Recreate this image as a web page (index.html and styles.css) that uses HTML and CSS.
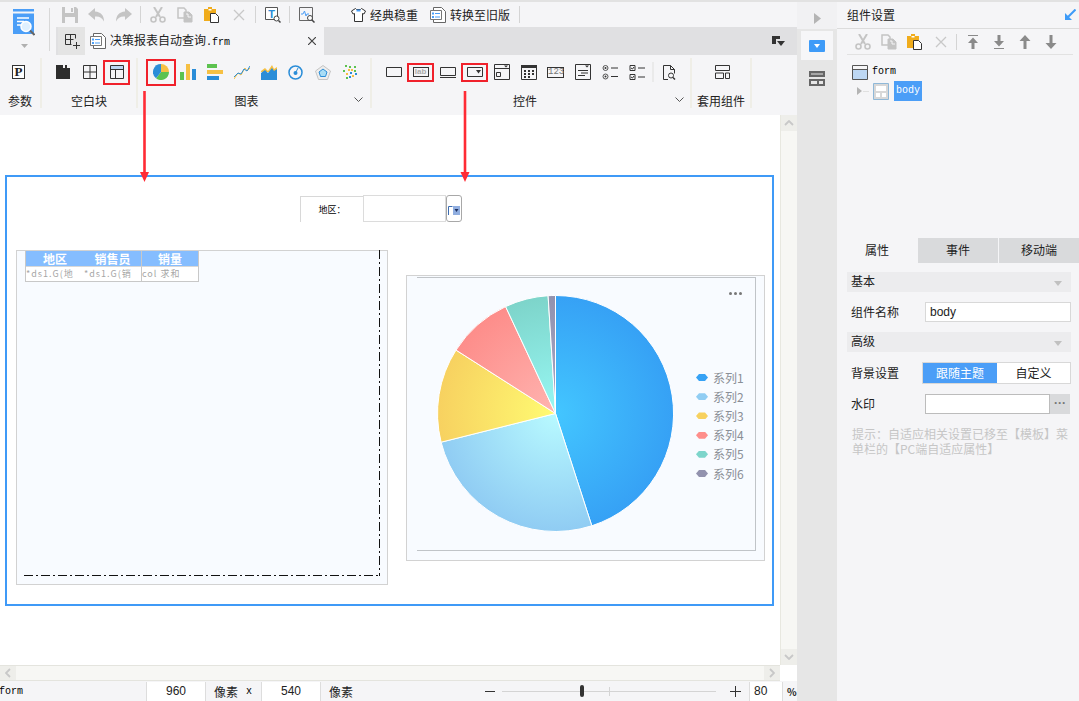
FILE: index.html
```html
<!DOCTYPE html>
<html lang="en">
<head>
    <meta charset="UTF-8">
    <title>决策报表自动查询.frm</title>
    <link rel="stylesheet" href="styles.css">
</head>
<body>

    <!-- Shared icons -->
    <svg class="defs" width="0" height="0">
        <defs>
            <symbol id="i-cut" viewBox="0 0 16 16">
                <path d="M4 0l6 10M12 0L6 10" fill="none" stroke="#c4c4c4" stroke-width="2"/>
                <circle cx="3.5" cy="12.5" r="2.5" fill="none" stroke="#c4c4c4" stroke-width="1.6"/>
                <circle cx="12.5" cy="12.5" r="2.5" fill="none" stroke="#c4c4c4" stroke-width="1.6"/>
            </symbol>
            <symbol id="i-copy" viewBox="0 0 16 16">
                <path d="M1 1h6l2 2v8H1z" fill="#f5f5f7" stroke="#c4c4c4" stroke-width="1.5"/>
                <path d="M7 5h5l3 3v7H7z" fill="#c4c4c4" stroke="#c4c4c4"/>
                <path d="M9 7h2v3h3" fill="none" stroke="#f5f5f7"/>
            </symbol>
            <symbol id="i-paste" viewBox="0 0 16 16">
                <path d="M0 2h4V0h4v2h4v12H0z" fill="#f0ac1c"/>
                <path d="M4.500 2h3v1.500h-3z" fill="#fff"/>
                <path d="M6.500 6.500h5l3 3v6h-8z" fill="#fff" stroke="#333"/>
            </symbol>
            <symbol id="i-x" viewBox="0 0 16 16">
                <path d="M3 3l10 10M13 3L3 13" stroke="#c8c8c8" stroke-width="1.3"/>
            </symbol>
            <symbol id="i-list" viewBox="0 0 16 16">
                <path d="M3.500 .5h8l4 4v11h-12z" fill="#fff" stroke="#666"/>
                <path d="M.5 3.500h11v9H.5z" fill="#fff" stroke="#777"/>
                <path d="M2 5.500h2v2H2zM2 9h2v2H2z" fill="#4b9ef7"/>
                <path d="M5 6.500h5M5 10h5" stroke="#4b9ef7"/>
            </symbol>
        </defs>
    </svg>

    <div class="left">
        <div class="head">
            <div class="logo-col">
                <div class="logo">
                    <svg width="22" height="30" viewBox="0 0 22 30">
                        <path d="M0 0h21v2.500H0z" fill="#4b9ef7"/>
                        <path d="M0 4.500h21V25H0z" fill="#4b9ef7"/>
                        <path d="M4 9h12M4 12.500h7M4 16h6" stroke="#fff" stroke-width="1.300"/>
                        <circle cx="13" cy="17.500" r="5" fill="#dff0ff" stroke="#fff" stroke-width="1.500"/>
                        <path d="M17 21.500l4.500 4.500" stroke="#666" stroke-width="2"/>
                    </svg>
                    <svg class="logo-caret" width="7" height="4" viewBox="0 0 7 4"><path d="M0 0h7L3.500 4z" fill="#b0b0b0"/></svg>
                </div>
            </div>
            <div class="head-main">
                <div class="toolbar">
                    <span class="cell"><svg width="16" height="16" viewBox="0 0 16 16"><path d="M0 0h14l2 2v14H0z" fill="#c4c4c4"/><path d="M3 0h9v6H3zM3 10h10v6H3z" fill="#f5f5f7"/><path d="M9 1h2v4H9z" fill="#c4c4c4"/></svg></span>
                    <span class="cell"><svg width="17" height="14" viewBox="0 0 17 14"><path d="M7 0L0 6l7 6V8.500c4-.5 7 1 9 5 0-6-3-9.500-9-10z" fill="#c4c4c4"/></svg></span>
                    <span class="cell"><svg width="17" height="14" viewBox="0 0 17 14"><path d="M10 0l7 6-7 6V8.500c-4-.5-7 1-9 5 0-6 3-9.500 9-10z" fill="#c4c4c4"/></svg></span>
                    <i class="tsep"></i>
                    <span class="cell"><svg class="ic"><use href="#i-cut"/></svg></span>
                    <span class="cell"><svg class="ic"><use href="#i-copy"/></svg></span>
                    <span class="cell"><svg class="ic"><use href="#i-paste"/></svg></span>
                    <span class="cell"><svg class="ic"><use href="#i-x"/></svg></span>
                    <i class="tsep"></i>
                    <span class="cell"><svg class="ic" viewBox="0 0 16 16"><path d="M.5.500h12v12H.5z" fill="#fff" stroke="#555"/><text x="6.500" y="10.500" class="t-glyph">T</text><circle cx="11.500" cy="11.500" r="2.500" fill="#fff" stroke="#444"/><path d="M13.500 13.500l2 2" stroke="#444" stroke-width="1.500"/></svg></span>
                    <i class="tsep"></i>
                    <span class="cell"><svg class="ic" viewBox="0 0 16 16"><path d="M.5.500h13v13H.5z" fill="#f5f5f7" stroke="#666"/><path d="M2 7h2l1.500-3L7 9l1-2h2" fill="none" stroke="#4b9ef7"/><circle cx="11" cy="11" r="2.500" fill="#fff" stroke="#444"/><path d="M13 13l2.500 2.500" stroke="#444" stroke-width="1.500"/></svg></span>
                    <span class="tb-text first">
                        <svg width="15" height="14" viewBox="0 0 15 14"><path d="M4.500.5L.5 3l1.500 3 1.500-.5v8h8v-8l1.500.5L14.500 3l-4-2.500-1 1h-4z" fill="#fff" stroke="#333"/><path d="M5.500 1.500h4v2h-4z" fill="#4b9ef7"/></svg>
                        经典稳重
                    </span>
                    <span class="tb-text">
                        <svg class="ic"><use href="#i-list"/></svg>
                        转换至旧版
                    </span>
                    <i class="tsep last"></i>
                </div>
                <div class="tabs">
                    <span class="tab-add">
                        <svg width="15" height="15" viewBox="0 0 15 15"><path d="M.5.500h10v4M.5.500v10h6M.5 5.500h8M5.500.5v10M11.500 8v7M8 11.500h7" fill="none" stroke="#333"/></svg>
                    </span>
                    <div class="tab">
                        <svg class="ic"><use href="#i-list"/></svg>
                        <span class="tab-name">决策报表自动查询<span class="mono">.frm</span></span>
                        <svg class="tab-close" width="8" height="8" viewBox="0 0 8 8"><path d="M0 0l8 8M8 0L0 8" stroke="#444" stroke-width="1.200"/></svg>
                    </div>
                    <svg class="tab-menu" width="13" height="11" viewBox="0 0 13 11"><path d="M0 0h8v3h-4v5H0z" fill="#333"/><path d="M5 5h8l-4 5z" fill="#333"/></svg>
                </div>
            </div>
        </div>

        <div class="ribbon">
            <div class="group g-param">
                <div class="g-icons">
                    <span class="cell"><span class="p-ic">P</span></span>
                </div>
                <div class="g-label">参数</div>
            </div>
            <div class="group g-blank">
                <div class="g-icons">
                    <span class="cell"><svg width="14" height="14" viewBox="0 0 14 14"><path d="M0 0h7v3h2V0h2v3h3v11H0z" fill="#2d2d2d"/></svg></span>
                    <span class="cell"><svg width="14" height="14" viewBox="0 0 14 14"><path d="M.5.500h13v13H.5zM.5 7h13M7 .5V14" fill="none" stroke="#333"/></svg></span>
                    <span class="cell"><span class="red r-blank"><svg width="14" height="14" viewBox="0 0 14 14"><path d="M.5.500h13v4H.5z" fill="#bcd7f2"/><path d="M.5.500h13v13H.5zM.5 4.500h13M5.500 4.500V14" fill="none" stroke="#333"/></svg></span></span>
                </div>
                <div class="g-label">空白块</div>
            </div>
            <div class="group g-chart">
                <div class="g-icons">
                    <span class="cell"><span class="red r-pie"><svg width="16" height="16" viewBox="0 0 16 16"><path d="M8 8V0a8 8 0 0 1 8 8z" fill="#f6c043"/><path d="M8 8h8a8 8 0 0 1-13 6.200z" fill="#5cc24f"/><path d="M8 8L3 14.200A8 8 0 0 1 8 0z" fill="#2a8dd8"/></svg></span></span>
                    <span class="cell"><svg width="16" height="16" viewBox="0 0 16 16"><path d="M0 8h4v8H0z" fill="#5cc24f"/><path d="M6 0h4v16H6z" fill="#f6c043"/><path d="M12 5h4v11h-4z" fill="#2a8dd8"/></svg></span>
                    <span class="cell"><svg width="16" height="16" viewBox="0 0 16 16"><path d="M0 0h10v4H0z" fill="#5cc24f"/><path d="M0 6h16v4H0z" fill="#f6c043"/><path d="M0 12h12v4H0z" fill="#2a8dd8"/></svg></span>
                    <span class="cell"><svg width="16" height="14" viewBox="0 0 16 14"><path d="M0 14l4-6 3 2 4-7 2 3 3-3" fill="none" stroke="#f6c043"/><path d="M0 12l4-4 3 1 3-5 3 2 3-5" fill="none" stroke="#2a8dd8"/></svg></span>
                    <span class="cell"><svg width="16" height="15" viewBox="0 0 16 15"><path d="M0 6l4-3 3 3 4-6 2 4 3-2v5H0z" fill="#f6c043"/><path d="M0 8l4-3 3 3 4-5 2 3 3-2v11H0z" fill="#2a8dd8"/></svg></span>
                    <span class="cell"><svg width="15" height="15" viewBox="0 0 15 15"><circle cx="7.500" cy="7.500" r="6.500" fill="none" stroke="#2a8dd8" stroke-width="1.500"/><circle cx="7.500" cy="8" r="2" fill="#2a8dd8"/><path d="M8 7l2-4" stroke="#2a8dd8"/></svg></span>
                    <span class="cell"><svg width="16" height="15" viewBox="0 0 16 15"><path d="M8 .5l7.500 5.500-3 8.500h-9L.5 6z" fill="#eee" stroke="#c4c4c4"/><path d="M8 4l4 3-1.500 4.500h-5L4 7z" fill="#a9ddf5" stroke="#2a8dd8"/></svg></span>
                    <span class="cell"><svg width="14" height="15" viewBox="0 0 14 15"><path d="M2 0h2v2H2zM6 1h2v2H6zM11 1h2v2h-2zM0 5h2v2H0zM11 5h2v2h-2zM3 12h2v2H3z" fill="#5cc24f"/><path d="M5 4h2v2H5zM8 4h2v2H8zM3 8h2v2H3zM9 10h2v2H9z" fill="#f6c043"/><path d="M7 7h2v2H7zM12 8h2v2h-2zM6 11h2v2H6z" fill="#2a8dd8"/></svg></span>
                </div>
                <div class="g-label">图表</div>
                <svg class="chev" width="9" height="5" viewBox="0 0 9 5"><path d="M.5.500l4 4 4-4" fill="none" stroke="#555"/></svg>
            </div>
            <div class="group g-ctrl">
                <div class="g-icons">
                    <span class="cell"><svg width="16" height="10" viewBox="0 0 16 10"><path d="M.5.500h15v9H.5z" fill="none" stroke="#333"/></svg></span>
                    <span class="cell"><span class="red r-ctrl"><span class="lab-ic">lab</span></span></span>
                    <span class="cell"><svg width="16" height="11" viewBox="0 0 16 11"><path d="M.5.500h15v8H.5z" fill="none" stroke="#333"/><path d="M0 10.500h16" stroke="#333"/></svg></span>
                    <span class="cell"><span class="red r-ctrl"><svg width="16" height="10" viewBox="0 0 16 10"><path d="M.5.500h15v9H.5z" fill="none" stroke="#333"/><path d="M9 3h5l-2.500 3.500z" fill="#333"/></svg></span></span>
                    <span class="cell"><svg width="16" height="16" viewBox="0 0 16 16"><path d="M.5.500h15v15H.5zM.5 4.500h15M6.500 8.500h-4v4h4z" fill="none" stroke="#333"/><path d="M10 1.500h4L12 3.500z" fill="#333"/></svg></span>
                    <span class="cell"><svg width="16" height="16" viewBox="0 0 16 16"><path d="M.5 1.500h15v14H.5z" fill="none" stroke="#333"/><path d="M0 1h16v3H0zM3 6h2v2H3zM7 6h2v2H7zM11 6h2v2h-2zM3 9h2v2H3zM7 9h2v2H7zM11 9h2v2h-2zM3 12h2v2H3zM7 12h2v2H7z" fill="#333"/></svg></span>
                    <span class="cell"><span class="num-ic">123</span></span>
                    <span class="cell"><svg width="16" height="16" viewBox="0 0 16 16"><path d="M.5.500h15v15H.5zM3 6.500h10M6 9h7M3 11.500h7" fill="none" stroke="#333"/><path d="M10 1.500h4L12 3.500z" fill="#333"/></svg></span>
                    <span class="cell"><svg width="16" height="15" viewBox="0 0 16 15"><circle cx="3.500" cy="3" r="2.500" fill="none" stroke="#555"/><circle cx="3.500" cy="3" r="1" fill="#333"/><circle cx="3.500" cy="11.500" r="2.500" fill="none" stroke="#555"/><circle cx="3.500" cy="11.500" r="1" fill="#333"/><path d="M9 3h7M9 11.500h7" stroke="#333"/></svg></span>
                    <span class="cell"><svg width="16" height="15" viewBox="0 0 16 15"><path d="M1 .5h5v5H1zM1 9.500h5v5H1zM9 3h7M9 12h7" fill="none" stroke="#333"/><path d="M2 3l1.500 1L5 2M2 12l1.500 1L5 11" fill="none" stroke="#333"/></svg></span>
                    <i class="rsep"></i>
                    <span class="cell"><svg width="13" height="15" viewBox="0 0 13 15"><path d="M5 14.500H.5V.5h7l4 4v4M7.500.5v4h4" fill="none" stroke="#333"/><circle cx="8" cy="10.500" r="2.500" fill="none" stroke="#333"/><path d="M10 12.500l2 2" stroke="#333" stroke-width="1.500"/></svg></span>
                </div>
                <div class="g-label">控件</div>
                <svg class="chev" width="9" height="5" viewBox="0 0 9 5"><path d="M.5.500l4 4 4-4" fill="none" stroke="#555"/></svg>
            </div>
            <div class="group g-comp">
                <div class="g-icons">
                    <span class="cell"><svg width="15" height="14" viewBox="0 0 15 14"><path d="M.5.500h14v5H.5zM.5 8h8v5.500H.5zM10.500 8h4v5.500h-4z" fill="none" stroke="#333"/></svg></span>
                </div>
                <div class="g-label">套用组件</div>
            </div>
        </div>

        <div class="work">
            <div class="canvas">
                <div class="frame">
                    <div class="filter">
                        <span class="filter-label">地区：</span>
                        <span class="filter-input"></span>
                        <span class="filter-btn">
                            <svg width="12" height="9" viewBox="0 0 12 9"><path d="M.5 9V.5h4" fill="none" stroke="#3d6cb0"/><path d="M5 0h7v9H5z" fill="#90aee0"/><path d="M6.500 3h4L8.500 6z" fill="#1d2f5e"/></svg>
                        </span>
                    </div>
                    <div class="blocks">
                        <div class="table-block">
                            <div class="tbl">
                                <div class="th">地区</div>
                                <div class="th">销售员</div>
                                <div class="th th-last">销量</div>
                                <div class="td">*ds1.G(地</div>
                                <div class="td">*ds1.G(销</div>
                                <div class="td td-last">col 求和</div>
                            </div>
                            <svg class="dash" width="372" height="335" viewBox="0 0 372 335">
                                <path d="M363.500 0V326" fill="none" stroke="#111" stroke-dasharray="9 3 2 3"/>
                                <path d="M8 325.500H362" fill="none" stroke="#111" stroke-dasharray="9 3 2 3"/>
                            </svg>
                        </div>
                        <div class="chart-block">
                            <div class="chart-inner">
                                <svg class="pie" width="237" height="237" viewBox="-118.500 -118.500 237 237">
                                    <defs>
                                        <radialGradient id="p1" gradientUnits="userSpaceOnUse" cx="0" cy="0" r="118"><stop offset="0" stop-color="#43c6ff"/><stop offset="1" stop-color="#36a1f5"/></radialGradient>
                                        <radialGradient id="p2" gradientUnits="userSpaceOnUse" cx="0" cy="0" r="118"><stop offset="0" stop-color="#b8faff"/><stop offset="1" stop-color="#90ccf3"/></radialGradient>
                                        <radialGradient id="p3" gradientUnits="userSpaceOnUse" cx="0" cy="0" r="118"><stop offset="0" stop-color="#fffb72"/><stop offset="1" stop-color="#f7d160"/></radialGradient>
                                        <radialGradient id="p4" gradientUnits="userSpaceOnUse" cx="0" cy="0" r="118"><stop offset="0" stop-color="#ffb4b0"/><stop offset="1" stop-color="#fd8d8a"/></radialGradient>
                                        <radialGradient id="p5" gradientUnits="userSpaceOnUse" cx="0" cy="0" r="118"><stop offset="0" stop-color="#98f8f4"/><stop offset="1" stop-color="#7dd4ca"/></radialGradient>
                                        <radialGradient id="p6" gradientUnits="userSpaceOnUse" cx="0" cy="0" r="118"><stop offset="0" stop-color="#a6a6c8"/><stop offset="1" stop-color="#9292ae"/></radialGradient>
                                    </defs>
                                    <g stroke="#fff" stroke-width="1">
                                        <path d="M0 0V-118A118 118 0 0 1 36.300 112.300z" fill="url(#p1)"/>
                                        <path d="M0 0L36.300 112.300A118 118 0 0 1-114.400 28.700z" fill="url(#p2)"/>
                                        <path d="M0 0L-114.400 28.700A118 118 0 0 1-99.500-63.400z" fill="url(#p3)"/>
                                        <path d="M0 0L-99.500-63.400A118 118 0 0 1-49.900-106.900z" fill="url(#p4)"/>
                                        <path d="M0 0L-49.900-106.900A118 118 0 0 1-7.400-117.800z" fill="url(#p5)"/>
                                        <path d="M0 0L-7.400-117.800A118 118 0 0 1 0-118z" fill="url(#p6)"/>
                                    </g>
                                </svg>
                                <ul class="legend">
                                    <li><i class="dot s1"></i>系列1</li>
                                    <li><i class="dot s2"></i>系列2</li>
                                    <li><i class="dot s3"></i>系列3</li>
                                    <li><i class="dot s4"></i>系列4</li>
                                    <li><i class="dot s5"></i>系列5</li>
                                    <li><i class="dot s6"></i>系列6</li>
                                </ul>
                                <span class="chart-menu"><i></i><i></i><i></i></span>
                            </div>
                        </div>
                    </div>
                </div>
            </div>
            <div class="vscroll">
                <span class="sbtn"><svg width="10" height="6" viewBox="0 0 10 6"><path d="M1 5l4-4 4 4" fill="none" stroke="#c8c8c8" stroke-width="1.800"/></svg></span>
                <span class="sbtn"><svg width="10" height="6" viewBox="0 0 10 6"><path d="M1 1l4 4 4-4" fill="none" stroke="#c8c8c8" stroke-width="1.800"/></svg></span>
            </div>
        </div>

        <div class="hscroll">
            <div class="hbar">
                <span class="sbtn"><svg width="6" height="10" viewBox="0 0 6 10"><path d="M5 1L1 5l4 4" fill="none" stroke="#c8c8c8" stroke-width="1.800"/></svg></span>
                <span class="sbtn"><svg width="6" height="10" viewBox="0 0 6 10"><path d="M1 1l4 4-4 4" fill="none" stroke="#c8c8c8" stroke-width="1.800"/></svg></span>
            </div>
        </div>

        <div class="status">
            <span class="mono st-form">form</span>
            <span class="st-input w-size">960</span>
            <span class="st-unit">像素</span>
            <span class="mono st-x">x</span>
            <span class="st-input w-size">540</span>
            <span class="st-unit">像素</span>
            <span class="zoom-minus"></span>
            <div class="slider"><i class="knob"></i><i class="tick"></i></div>
            <svg class="zoom-plus" width="11" height="11" viewBox="0 0 11 11"><path d="M0 5.500h11M5.500 0v11" stroke="#333"/></svg>
            <span class="st-input w-zoom">80</span>
            <span class="st-pct">%</span>
        </div>

        <!-- red callout arrows -->
        <svg class="arrows" width="797" height="200" viewBox="0 0 797 200">
            <path d="M144.500 91V174M465 91V174" stroke="#ff2b35" stroke-width="2.600"/>
            <path d="M140 172h9l-4.500 10zM460.500 172h9L465 182z" fill="#ff2b35"/>
        </svg>
    </div>

    <div class="strip">
        <div class="strip-top">
            <svg width="7" height="11" viewBox="0 0 7 11"><path d="M0 0l7 5.500L0 11z" fill="#b4b4b4"/></svg>
        </div>
        <div class="strip-sel">
            <svg width="16" height="12" viewBox="0 0 16 12"><path d="M1 0h14a1 1 0 0 1 1 1v10a1 1 0 0 1-1 1H1a1 1 0 0 1-1-1V1a1 1 0 0 1 1-1z" fill="#3e9bf8"/><path d="M5 4h6L8 8z" fill="#fff"/></svg>
        </div>
        <div class="strip-item">
            <svg width="16" height="15" viewBox="0 0 16 15"><path d="M0 0h16v6H0zM0 8h16v7H0z" fill="#666"/><path d="M2 10h6v3H2zM10 10h4v3h-4z" fill="#e6e6e6"/><path d="M2 3h12" stroke="#e6e6e6"/></svg>
        </div>
    </div>

    <div class="panel">
        <div class="panel-title">
            组件设置
            <svg width="11" height="11" viewBox="0 0 11 11"><path d="M10.500.5L2 9" stroke="#3e9bf8" stroke-width="2"/><path d="M0 4v7h7z" fill="#3e9bf8"/></svg>
        </div>
        <div class="panel-tools">
            <span class="pcell"><svg class="ic"><use href="#i-cut"/></svg></span>
            <span class="pcell"><svg class="ic"><use href="#i-copy"/></svg></span>
            <span class="pcell"><svg class="ic"><use href="#i-paste"/></svg></span>
            <span class="pcell"><svg class="ic"><use href="#i-x"/></svg></span>
            <i class="psep"></i>
            <span class="pcell"><svg width="12" height="14" viewBox="0 0 12 14"><path d="M1 .5h10" stroke="#8a8a8a"/><path d="M6 2.500L11 8H7.500v6h-3V8H1z" fill="#8a8a8a"/></svg></span>
            <span class="pcell"><svg width="12" height="14" viewBox="0 0 12 14"><path d="M1 13.500h10" stroke="#8a8a8a"/><path d="M6 11.500L11 6H7.500V0h-3v6H1z" fill="#8a8a8a"/></svg></span>
            <span class="pcell"><svg width="12" height="14" viewBox="0 0 12 14"><path d="M6 0l5.500 6H7.500v8h-3V6H.5z" fill="#8a8a8a"/></svg></span>
            <span class="pcell"><svg width="12" height="14" viewBox="0 0 12 14"><path d="M6 14l5.500-6H7.500V0h-3v8H.5z" fill="#8a8a8a"/></svg></span>
        </div>
        <div class="tree">
            <div class="node">
                <svg width="16" height="15" viewBox="0 0 16 15"><path d="M1 4h14v10H1z" fill="#bdd7f3"/><path d="M.5.500h15v14H.5zM.5 4.500h15" fill="none" stroke="#555"/></svg>
                <span class="mono">form</span>
            </div>
            <div class="node node-body">
                <svg class="tree-arrow" width="5" height="8" viewBox="0 0 5 8"><path d="M0 0l5 4-5 4z" fill="#b4b4b4"/></svg>
                <i class="tree-line"></i>
                <svg width="16" height="17" viewBox="0 0 16 17"><path d="M.5.500h15v16H.5z" fill="#d8d8d8" stroke="#8fb8d8"/><path d="M3 3h10v5H3zM3 10h4v4H3zM9 10h4v4H9z" fill="#fff"/></svg>
                <span class="mono sel">body</span>
            </div>
        </div>
        <div class="prop-tabs">
            <span class="ptab on">属性</span>
            <span class="ptab">事件</span>
            <span class="ptab">移动端</span>
        </div>
        <div class="props">
            <div class="section">基本<i class="sec-caret"></i></div>
            <div class="row">
                <label>组件名称</label>
                <span class="field">body</span>
            </div>
            <div class="section">高级<i class="sec-caret"></i></div>
            <div class="row row-bg">
                <label>背景设置</label>
                <div class="toggle"><span class="on">跟随主题</span><span>自定义</span></div>
            </div>
            <div class="row row-mark">
                <label>水印</label>
                <span class="field field-mark"></span>
                <span class="more">···</span>
            </div>
            <p class="hint">提示：自适应相关设置已移至【模板】菜单栏的【PC端自适应属性】</p>
        </div>
    </div>

</body>
</html>
```

FILE: styles.css
```css
* {
    box-sizing: border-box;
}

html, body {
    height: 100%;
}

body {
    margin: 0;
    display: flex;
    width: 1079px;
    height: 701px;
    overflow: hidden;
    background-color: #fff;
    color: #222;
    font-family: "Noto Sans CJK SC", "Liberation Sans", sans-serif;
    font-size: 12px;
    line-height: 1;
}

.defs {
    position: absolute;
}

.ic {
    width: 16px;
    height: 16px;
    flex: none;
}

.mono {
    font-family: "Liberation Mono", monospace;
    font-size: 10px;
    color: #000;
}

.left {
    width: 797px;
    height: 701px;
    display: flex;
    flex-direction: column;
    position: relative;
}

/* Top bars */
.head {
    display: flex;
    height: 55px;
    flex: none;
    background-color: #f5f5f7;
    border-top: 2px solid #e2e2e2;
}

.logo-col {
    width: 56px;
    flex: none;
    padding-top: 6px;
}

.logo {
    width: 50px;
    height: 43px;
    border-right: 1px solid #d8d8d8;
    display: flex;
    flex-direction: column;
    align-items: center;
    gap: 5px;
    padding-right: 2px;
    padding-top: 1px;
}

.logo-caret {
    margin-left: 1px;
}

.head-main {
    flex: 1;
    display: flex;
    flex-direction: column;
}

.toolbar {
    height: 25px;
    display: flex;
    align-items: center;
}

.cell {
    width: 27px;
    height: 26px;
    flex: none;
    display: flex;
    align-items: center;
    justify-content: center;
}

.t-glyph {
    font-family: "Liberation Sans", sans-serif;
    font-size: 11px;
    font-weight: bold;
    fill: #2a8dd8;
    text-anchor: middle;
}

.tsep {
    width: 1px;
    height: 17px;
    margin: 0 3px;
    background-color: #d4d4d4;
    flex: none;
}

.tb-text {
    display: flex;
    align-items: center;
    gap: 4px;
    margin-left: 12px;
    flex: none;
}

.tb-text.first {
    margin-left: 31px;
}

.tsep.last {
    margin-left: 9px;
}

.tabs {
    height: 28px;
    padding-left: 2px;
    display: flex;
    align-items: stretch;
    background-color: #e0e0e2;
}

.tab-add {
    width: 27px;
    display: flex;
    align-items: center;
    justify-content: center;
    background-color: #e4e4e4;
    padding-left: 2px;
}

.tab {
    width: 239px;
    background-color: #f5f5f7;
    display: flex;
    align-items: center;
    padding: 0 8px 0 5px;
    gap: 4px;
}

.tab-name {
    flex: 1;
}

.tab-menu {
    margin: 9px 0 0 448px;
}

/* Ribbon */
.ribbon {
    height: 60px;
    flex: none;
    display: flex;
    background-color: #f5f5f7;
    padding-top: 3px;
}

.group {
    height: 50px;
    border-right: 2px solid #efeee7;
    position: relative;
    flex: none;
}

.g-icons {
    display: flex;
    align-items: center;
    height: 28px;
}

.g-label {
    text-align: center;
    margin-top: 9px;
}

.g-param {
    width: 42px;
}

.g-param .g-icons {
    padding-left: 5px;
}

.p-ic {
    width: 13px;
    height: 14px;
    border: 1px solid #333;
    background-color: #fff;
    font-family: "Liberation Serif", serif;
    font-size: 13px;
    font-weight: bold;
    line-height: 12px;
    text-align: center;
    color: #222;
}

.g-blank {
    width: 96px;
}

.g-blank .g-icons {
    padding-left: 7px;
}

.g-chart {
    width: 234px;
}

.g-chart .g-icons {
    padding-left: 9px;
}

.g-chart .g-label,
.g-ctrl .g-label {
    padding-right: 15px;
}

.g-ctrl {
    width: 320px;
}

.g-ctrl .g-label {
    padding-right: 12px;
}

.g-ctrl .g-icons {
    padding-left: 8px;
}

.g-comp {
    width: 60px;
}

.g-comp .g-icons {
    padding-left: 17px;
}

.chev {
    position: absolute;
    right: 7px;
    top: 39px;
}

.g-ctrl .chev {
    right: 6px;
}

.rsep {
    width: 2px;
    height: 20px;
    margin: 0 2px;
    flex: none;
    background-color: #eaeaea;
}

.red {
    display: flex;
    align-items: center;
    justify-content: center;
    border: 2px solid #f0212b;
    flex: none;
}

.r-blank {
    width: 27px;
    height: 25px;
}

.r-pie {
    width: 30px;
    height: 27px;
}

.r-ctrl {
    width: 27px;
    height: 19px;
}

.lab-ic {
    width: 16px;
    height: 10px;
    border: 1px solid #333;
    font-family: "Liberation Sans", sans-serif;
    font-size: 8px;
    font-weight: bold;
    line-height: 8px;
    text-align: center;
    color: #aaa;
}

.num-ic {
    width: 17px;
    height: 11px;
    border: 1px solid #333;
    font-family: "Liberation Mono", monospace;
    font-size: 9px;
    line-height: 9px;
    text-align: center;
    color: #777;
}

/* Canvas */
.work {
    height: 550px;
    flex: none;
    display: flex;
    background-color: #fff;
}

.canvas {
    flex: 1;
    padding: 60px 6px 0 5px;
}

.frame {
    width: 769px;
    height: 431px;
    border: 2px solid #3f9af7;
}

.filter {
    display: flex;
    align-items: flex-end;
    height: 27px;
    margin: 18px 0 0 293px;
}

.filter-label {
    width: 63px;
    height: 26px;
    border-top: 1px solid #d8d8d8;
    border-left: 1px solid #d8d8d8;
    font-size: 9px;
    line-height: 25px;
    text-align: center;
    color: #000;
}

.filter-input {
    width: 83px;
    height: 27px;
    border: 1px solid #dcdcdc;
}

.filter-btn {
    width: 16px;
    height: 27px;
    border: 1px solid #a8a8a8;
    border-radius: 3px;
    padding: 8px 0 0 1px;
}

.blocks {
    display: flex;
    align-items: flex-start;
    margin: 28px 0 0 9px;
}

.table-block {
    width: 372px;
    height: 335px;
    border: 1px solid #d2d2d2;
    background-color: #f8fbff;
    padding-left: 8px;
    position: relative;
}

.dash {
    position: absolute;
    left: -1px;
    top: -1px;
}

.tbl {
    width: 174px;
    display: grid;
    grid-template-columns: 58px 57px 57px;
    border: 1px solid #c8c8c8;
    border-top: 0;
}

.th {
    height: 15px;
    background-color: #85bdff;
    color: #fff;
    font-weight: bold;
    text-align: center;
    line-height: 15px;
}

.th-last,
.td-last {
    border-left: 1px solid #c8c8c8;
}

.td {
    height: 15px;
    border-top: 1px solid #d8d8d8;
    background-color: #fff;
    color: #a6a6a6;
    font-size: 9px;
    line-height: 14px;
    white-space: nowrap;
    letter-spacing: 1px;
}

.chart-block {
    width: 359px;
    height: 286px;
    margin: 25px 0 0 18px;
    border: 1px solid #d2d2d2;
    background-color: #f8fbff;
    padding: 1px 8px 9px 10px;
}

.chart-inner {
    height: 274px;
    border: 1px solid #c0c4c8;
    border-left: 0;
    display: flex;
    align-items: flex-start;
    position: relative;
}

.pie {
    flex: none;
    margin: 17px 0 0 20px;
}

.legend {
    list-style: none;
    margin: 90px 0 0 22px;
    padding: 0;
    color: #8a8f96;
}

.legend li {
    height: 19.2px;
    display: flex;
    align-items: center;
    gap: 5px;
}

.dot {
    width: 12px;
    height: 7px;
    clip-path: polygon(0 50%, 25% 0, 75% 0, 100% 50%, 75% 100%, 25% 100%);
}

.s1 { background-color: #36a2f5; }
.s2 { background-color: #90cdf3; }
.s3 { background-color: #f7d15f; }
.s4 { background-color: #fe8e8b; }
.s5 { background-color: #7dd5cb; }
.s6 { background-color: #9292ae; }

.chart-menu {
    position: absolute;
    right: 13px;
    top: 14px;
    display: flex;
    gap: 2px;
}

.chart-menu i {
    width: 3px;
    height: 3px;
    background-color: #777;
    border-radius: 50%;
}

.vscroll {
    width: 17px;
    flex: none;
    display: flex;
    flex-direction: column;
    justify-content: space-between;
    background-color: #f7f7f4;
    border-left: 1px solid #e8e8e0;
}

.sbtn {
    width: 16px;
    height: 16px;
    display: flex;
    align-items: center;
    justify-content: center;
    background-color: #eeeeea;
}

.hscroll {
    height: 16px;
    flex: none;
    background-color: #fff;
}

.hbar {
    width: 780px;
    height: 16px;
    display: flex;
    justify-content: space-between;
    background-color: #f7f7f4;
    border-top: 1px solid #e4e4de;
    border-bottom: 1px solid #e4e4de;
}

.hbar .sbtn {
    height: 14px;
}

.status {
    flex: 1;
    display: flex;
    align-items: center;
    background-color: #f5f5f7;
    padding-left: 0;
}

.st-form {
    width: 147px;
    margin-left: -1px;
}

.st-input {
    height: 20px;
    margin-top: 1px;
    background-color: #fff;
    border-left: 1px solid #ddd;
    border-right: 1px solid #ddd;
    font-family: "Liberation Sans", sans-serif;
    line-height: 19px;
    text-align: center;
    color: #222;
}

.w-size {
    width: 60px;
}

.w-zoom {
    width: 34px;
    text-align: left;
    padding-left: 4px;
    margin-left: 8px;
}

.st-unit {
    margin-left: 8px;
    width: 26px;
}

.st-x {
    margin: 0 9px 0 6px;
}

.zoom-minus {
    width: 10px;
    height: 1px;
    margin-left: 130px;
    background-color: #333;
}

.slider {
    width: 214px;
    height: 1px;
    margin-left: 7px;
    background-color: #d4d4d4;
    position: relative;
}

.knob {
    position: absolute;
    left: 78px;
    top: -6px;
    width: 4px;
    height: 12px;
    border-radius: 2px;
    background-color: #333;
}

.tick {
    position: absolute;
    left: 107px;
    top: -4px;
    width: 1px;
    height: 9px;
    background-color: #d4d4d4;
}

.zoom-plus {
    margin-left: 14px;
}

.st-pct {
    margin-left: 4px;
    font-size: 10px;
    font-weight: bold;
}

.arrows {
    position: absolute;
    left: 0;
    top: 0;
    pointer-events: none;
}

/* Side strip */
.strip {
    width: 40px;
    height: 701px;
    flex: none;
    background-color: #e6e6e6;
    display: flex;
    flex-direction: column;
    align-items: center;
}

.strip-top {
    width: 100%;
    height: 29px;
    padding-top: 11px;
    display: flex;
    justify-content: center;
    background-color: #f1f1f3;
    border-top: 2px solid #e2e2e2;
}

.strip-sel {
    width: 32px;
    height: 29px;
    margin-top: 2px;
    display: flex;
    align-items: center;
    justify-content: center;
    background-color: #f6f6f8;
}

.strip-item {
    margin-top: 11px;
}

/* Right panel */
.panel {
    width: 242px;
    height: 701px;
    flex: none;
    background-color: #f5f5f7;
    border-top: 2px solid #e2e2e2;
}

.panel-title {
    height: 27px;
    padding: 7px 3px 0 10px;
    display: flex;
    justify-content: space-between;
    border-bottom: 1px solid #dcdcdc;
}

.panel-tools {
    height: 26px;
    margin: 0 6px 0 10px;
    padding-left: 3px;
    display: flex;
    align-items: center;
    border-bottom: 1px solid #e2e2e2;
}

.pcell {
    width: 26px;
    height: 24px;
    flex: none;
    display: flex;
    align-items: center;
    justify-content: center;
}

.psep {
    width: 1px;
    height: 16px;
    margin: 0 3px 0 2px;
    background-color: #d4d4d4;
}

.tree {
    height: 183px;
    padding: 9px 0 0 15px;
}

.node {
    display: flex;
    align-items: center;
    gap: 4px;
    height: 16px;
}

.node-body {
    height: 20px;
    margin-top: 1px;
    padding-left: 5px;
}

.tree-line {
    width: 6px;
    height: 1px;
    margin-left: -3px;
    background-color: #e0e0e0;
}

.sel {
    background-color: #4b9ef7;
    color: #fff;
    height: 20px;
    line-height: 20px;
    padding: 0 2px;
    margin-left: 1px;
}

.prop-tabs {
    display: flex;
    height: 25px;
    gap: 1px;
}

.ptab {
    flex: 1;
    background-color: #d9dadc;
    text-align: center;
    line-height: 24px;
}

.ptab.on {
    background-color: #f5f5f7;
}

.props {
    padding: 9px 8px 0 10px;
}

.section {
    height: 20px;
    line-height: 18px;
    padding-left: 4px;
    background-color: #ececee;
    position: relative;
}

.sec-caret {
    position: absolute;
    right: 9px;
    top: 9px;
    border-left: 4px solid transparent;
    border-right: 4px solid transparent;
    border-top: 5px solid #c0c0c0;
}

.row {
    display: flex;
    align-items: center;
    height: 40px;
    padding-left: 4px;
}

.row label {
    width: 74px;
    flex: none;
}

.field {
    width: 146px;
    height: 20px;
    background-color: #fff;
    border: 1px solid #d8d8d8;
    font-family: "Liberation Sans", sans-serif;
    line-height: 18px;
    padding-left: 4px;
}

.row-bg {
    height: 42px;
}

.row-bg label {
    width: 71px;
}

.toggle {
    width: 149px;
    height: 22px;
    display: flex;
    background-color: #fff;
    border: 1px solid #d8d8d8;
}

.toggle span {
    flex: 1;
    text-align: center;
    line-height: 20px;
}

.toggle .on {
    flex: none;
    width: 74px;
    background-color: #4b9ef7;
    color: #fff;
}

.row-mark {
    height: 20px;
}

.field-mark {
    width: 125px;
    border-color: #bcbcbc;
}

.more {
    width: 20px;
    height: 20px;
    background-color: #d9dadc;
    color: #777;
    text-align: center;
    line-height: 19px;
    font-family: "Liberation Sans", sans-serif;
    font-weight: bold;
}

.hint {
    width: 222px;
    margin: 12px 0 0 5px;
    color: #c6c6c6;
    line-height: 15px;
}
```
